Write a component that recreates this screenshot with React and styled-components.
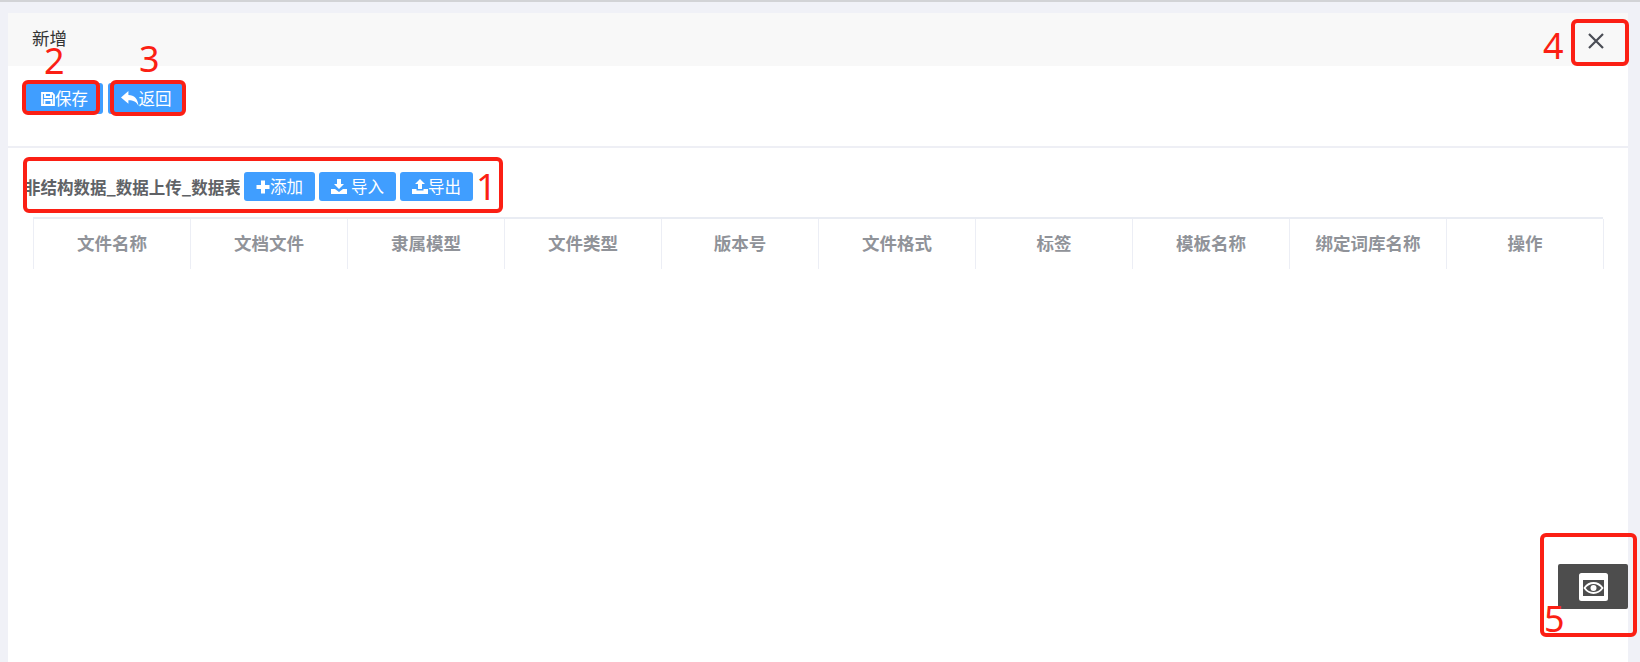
import React from "react";
import styled, { createGlobalStyle } from "styled-components";

const GlobalStyle = createGlobalStyle`
  html, body {
    margin: 0;
    padding: 0;
    height: 100%;
    overflow: hidden;
    font-family: "Noto Sans CJK SC", "Liberation Sans", sans-serif;
  }
`;

const Page = styled.div`
  position: relative;
  width: 1640px;
  height: 662px;
  box-sizing: border-box;
  padding: 11px 12px 0 8px;
  background: #f0f1f7;
  border-top: 2px solid #d2d3d6;
  overflow: hidden;
`;

const Card = styled.div`
  height: 100%;
  background: #fff;
  display: flex;
  flex-direction: column;
`;

const Header = styled.div`
  height: 53px;
  flex-shrink: 0;
  box-sizing: border-box;
  padding: 15px 24px 0;
  background: #f8f8f8;
  display: flex;
  justify-content: space-between;
  font-size: 17.5px;
  line-height: 20px;
  color: #333;
`;

const CloseIcon = styled.svg`
  width: 20px;
  height: 20px;
  margin: 3px -2px 0 0;
`;

const Toolbar = styled.div`
  height: 82px;
  flex-shrink: 0;
  box-sizing: border-box;
  padding: 17px 0 0 18px;
  border-bottom: 2px solid #eeeff5;
  display: flex;
  align-items: flex-start;
  gap: 5px;
`;

const Button = styled.button`
  height: ${(p) => p.$h}px;
  width: ${(p) => p.$w}px;
  padding: 0;
  border: none;
  border-radius: 3px;
  background: #409eff;
  color: #fff;
  font: 16.5px/1 "Noto Sans CJK SC", sans-serif;
  display: flex;
  align-items: center;
  justify-content: center;
  gap: ${(p) => p.$gap || 0}px;
`;

const TableSection = styled.div`
  padding: 24px 0 0 16px;
`;

const TitleRow = styled.div`
  height: 29px;
  display: flex;
  align-items: center;
  gap: 4px;
`;

const TableTitle = styled.span`
  width: 216px;
  overflow: hidden;
  white-space: nowrap;
  font-size: 16.5px;
  font-weight: 700;
  color: #606266;
`;

const HeadRow = styled.div`
  width: 1570px;
  height: 52px;
  margin: 16px 0 0 9px;
  box-sizing: border-box;
  border-top: 2px solid #e9ecf3;
  border-left: 1px solid #eceef5;
  display: grid;
  grid-template-columns: repeat(10, 157px);
`;

const HeadCell = styled.div`
  border-right: 1px solid #eceef5;
  display: flex;
  align-items: center;
  justify-content: center;
  padding-bottom: 4px;
  font-size: 17.5px;
  font-weight: 700;
  color: #909399;
`;

const ViewButton = styled.div`
  position: absolute;
  left: 1558px;
  top: 562px;
  width: 70px;
  height: 45px;
  border-radius: 2px;
  background: #4d4d4d;
  display: flex;
  align-items: center;
  justify-content: center;
`;

const Mark = styled.div`
  position: absolute;
  left: ${(p) => p.$x}px;
  top: ${(p) => p.$y}px;
  width: ${(p) => p.$w}px;
  height: ${(p) => p.$h}px;
  box-sizing: border-box;
  border: 4px solid #fb1f14;
  border-radius: 6px;
`;

const MarkNumber = styled.span`
  position: absolute;
  left: ${(p) => p.$x}px;
  top: ${(p) => p.$y}px;
  font: 36px/24px "Noto Sans", "Liberation Sans", sans-serif;
  color: #fb1f14;
`;

const SaveIcon = () => (
  <svg width="14" height="14" viewBox="0 0 14 14" fill="none" stroke="#fff" strokeWidth="1.800">
    <path d="M1 1h10l2 2v10H1z" />
    <path d="M4 1v4h6V1M3.500 13V8h7v5" />
  </svg>
);

const BackIcon = () => (
  <svg width="18" height="15" viewBox="0 0 17 14" fill="#fff">
    <path d="M7 0v3.600c5.500.2 9 3.400 9.500 10.400-1.800-3.800-4.700-5.200-9.500-5.300V12L0 6z" />
  </svg>
);

const PlusIcon = () => (
  <svg width="14" height="14" viewBox="0 0 14 14" fill="#fff">
    <path d="M5 .5h4V5h4.500v4H9v4.500H5V9H.5V5H5z" />
  </svg>
);

const DownloadIcon = () => (
  <svg width="16" height="15" viewBox="0 0 16 15" fill="#fff">
    <path d="M6 0h4v5h3L8 10 3 5h3z" />
    <path d="M0 10h4l4 3 4-3h4v5H0z" />
  </svg>
);

const UploadIcon = () => (
  <svg width="16" height="15" viewBox="0 0 16 15" fill="#fff">
    <path d="M8 0l5 5h-3v5H6V5H3z" />
    <path d="M0 10h4.500v1.500h7V10H16v5H0z" />
  </svg>
);

const EyeIcon = () => (
  <svg width="29" height="28" viewBox="0 0 29 28" fill="none">
    <path
      fillRule="evenodd"
      fill="#fff"
      d="M2.500 0h24A2.500 2.500 0 0 1 29 2.500v23a2.500 2.500 0 0 1-2.500 2.500h-24A2.500 2.500 0 0 1 0 25.500v-23A2.500 2.500 0 0 1 2.500 0zM4 7v16h21V7z"
    />
    <path d="M5.500 15c2.400-3.300 5.400-5 9-5s6.600 1.700 9 5c-2.400 3.300-5.400 5-9 5s-6.600-1.700-9-5z" stroke="#fff" strokeWidth="1.800" />
    <circle cx="14.500" cy="15" r="3" fill="#fff" />
  </svg>
);

const columns = ["文件名称", "文档文件", "隶属模型", "文件类型", "版本号", "文件格式", "标签", "模板名称", "绑定词库名称", "操作"];

const marks = [
  { x: 23, y: 157, w: 480, h: 56 },
  { x: 22, y: 80, w: 78, h: 35 },
  { x: 110, y: 80, w: 76, h: 36 },
  { x: 1571, y: 19, w: 58, h: 47 },
  { x: 1540, y: 533, w: 97, h: 104 },
];

const numbers = [
  { t: "1", x: 476, y: 175 },
  { t: "2", x: 44, y: 49 },
  { t: "3", x: 139, y: 47 },
  { t: "4", x: 1543, y: 34 },
  { t: "5", x: 1544, y: 607 },
];

export default function App() {
  return (
    <>
      <GlobalStyle />
      <Page>
        <Card>
          <Header>
            <span>新增</span>
            <CloseIcon viewBox="0 0 20 20" fill="none" stroke="#4a4d55" strokeWidth="2.200">
              <path d="M3 3l14 14M17 3L3 17" />
            </CloseIcon>
          </Header>
          <Toolbar>
            <Button $w={77} $h={31}><SaveIcon />保存</Button>
            <Button $w={76} $h={31}><BackIcon />返回</Button>
          </Toolbar>
          <TableSection>
            <TitleRow>
              <TableTitle>非结构数据_数据上传_数据表</TableTitle>
              <Button $w={71} $h={29}><PlusIcon />添加</Button>
              <Button $w={77} $h={29} $gap={4}><DownloadIcon />导入</Button>
              <Button $w={73} $h={29}><UploadIcon />导出</Button>
            </TitleRow>
            <HeadRow>
              {columns.map((c) => (
                <HeadCell key={c}>{c}</HeadCell>
              ))}
            </HeadRow>
          </TableSection>
        </Card>
        <ViewButton><EyeIcon /></ViewButton>
        {marks.map((m) => (
          <Mark key={m.x} $x={m.x} $y={m.y - 2} $w={m.w} $h={m.h} />
        ))}
        {numbers.map((n) => (
          <MarkNumber key={n.t} $x={n.x} $y={n.y - 2}>{n.t}</MarkNumber>
        ))}
      </Page>
    </>
  );
}
